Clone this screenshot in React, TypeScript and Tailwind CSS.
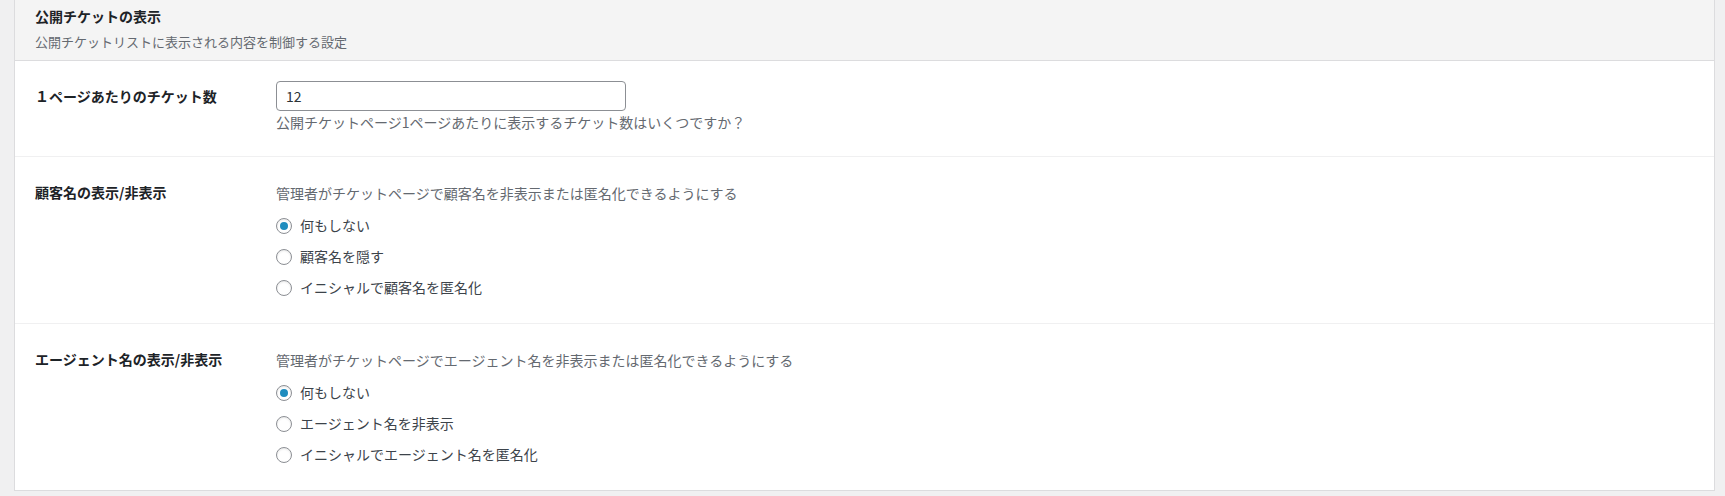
import { useState } from 'react';

const font = { fontFamily: '"Noto Sans CJK JP", "Noto Sans", sans-serif' };

type Option = { value: string; label: string };

const Radio = ({ checked, label, onClick }: { checked: boolean; label: string; onClick: () => void }) => (
  <label onClick={onClick} className="flex h-[31px] cursor-pointer items-center gap-2">
    <span className="flex h-4 w-4 shrink-0 items-center justify-center rounded-full border border-[#8c8f94] bg-white shadow-[inset_0_1px_2px_rgba(0,0,0,0.1)]">
      {checked && <span className="h-2 w-2 rounded-full bg-[#1e8cbe]" />}
    </span>
    <span className="text-[14px] leading-[21px] text-[#3c434a]">{label}</span>
  </label>
);

const RadioRow = ({
  title,
  description,
  options,
}: {
  title: string;
  description: string;
  options: Option[];
}) => {
  const [value, setValue] = useState(options[0].value);
  return (
    <div className="flex h-[167px] border-t border-[#f0f0f1]">
      <div className="w-[261px] shrink-0 pl-5 pt-[22px]">
        <span className="text-[14px] font-bold leading-[21px] text-[#1d2327]">{title}</span>
      </div>
      <div className="pt-[26px]">
        <p className="text-[14px] leading-[21px] text-[#646970]">{description}</p>
        <div className="mt-[6px] flex flex-col">
          {options.map((o) => (
            <Radio key={o.value} checked={value === o.value} label={o.label} onClick={() => setValue(o.value)} />
          ))}
        </div>
      </div>
    </div>
  );
};

export default function App() {
  const [perPage, setPerPage] = useState('12');

  return (
    <div style={font} className="h-[496px] bg-[#f0f0f1] pl-[14px] pr-[10px]">
      <div className="border-x border-b border-[#dcdcde] bg-white">
        {/* ヘッダー */}
        <div className="h-[61px] border-b border-[#dcdcde] bg-[#f4f4f4] pl-5 pt-[6px]">
          <h2 className="text-[14px] font-bold leading-[21px] text-[#1d2327]">公開チケットの表示</h2>
          <p className="mt-[5px] text-[13px] leading-[20px] text-[#646970]">公開チケットリストに表示される内容を制御する設定</p>
        </div>

        {/* 1ページあたりのチケット数 */}
        <div className="flex h-[95px]">
          <div className="w-[261px] shrink-0 pl-5 pt-[22px]">
            <span className="text-[14px] font-bold leading-[21px] text-[#1d2327]">１ページあたりのチケット数</span>
          </div>
          <div className="pt-5">
            <input
              type="number"
              value={perPage}
              onChange={(e) => setPerPage(e.target.value)}
              className="h-[30px] w-[350px] rounded border border-[#8c8f94] bg-white px-[9px] text-[14px] text-[#2c3338] outline-none [appearance:textfield] [&::-webkit-inner-spin-button]:appearance-none"
            />
            <p className="mt-[1px] text-[14px] leading-[21px] text-[#646970]">
              公開チケットページ1ページあたりに表示するチケット数はいくつですか？
            </p>
          </div>
        </div>

        <RadioRow
          title="顧客名の表示/非表示"
          description="管理者がチケットページで顧客名を非表示または匿名化できるようにする"
          options={[
            { value: 'none', label: '何もしない' },
            { value: 'hide', label: '顧客名を隠す' },
            { value: 'initials', label: 'イニシャルで顧客名を匿名化' },
          ]}
        />

        <RadioRow
          title="エージェント名の表示/非表示"
          description="管理者がチケットページでエージェント名を非表示または匿名化できるようにする"
          options={[
            { value: 'none', label: '何もしない' },
            { value: 'hide', label: 'エージェント名を非表示' },
            { value: 'initials', label: 'イニシャルでエージェント名を匿名化' },
          ]}
        />
      </div>
    </div>
  );
}
